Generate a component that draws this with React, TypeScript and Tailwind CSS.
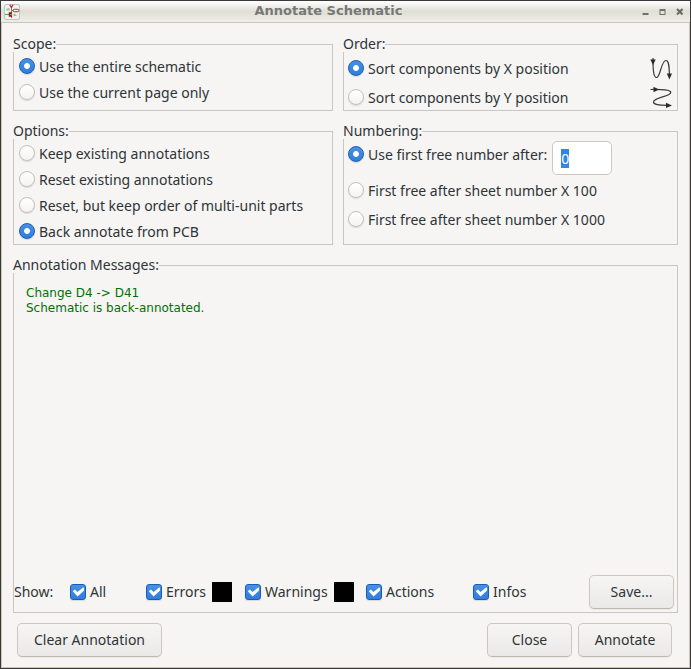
import { useEffect, useRef, useState, type ReactNode } from 'react'

type Scope = 'all' | 'page'
type Order = 'x' | 'y'
type Option = 'keep' | 'reset' | 'reset-order' | 'back'
type Numbering = 'first' | 'x100' | 'x1000'

interface Choice<T extends string> {
  id: T
  label: string
}

const scopes: Choice<Scope>[] = [
  { id: 'all', label: 'Use the entire schematic' },
  { id: 'page', label: 'Use the current page only' },
]

const options: Choice<Option>[] = [
  { id: 'keep', label: 'Keep existing annotations' },
  { id: 'reset', label: 'Reset existing annotations' },
  { id: 'reset-order', label: 'Reset, but keep order of multi-unit parts' },
  { id: 'back', label: 'Back annotate from PCB' },
]

const messages = ['Change D4 -> D41', 'Schematic is back-annotated.']

interface GroupProps {
  title: string
  className?: string
  bodyClassName?: string
  children: ReactNode
}

function Group({ title, className = '', bodyClassName = '', children }: GroupProps) {
  return (
    <fieldset className={`min-w-0 border border-[#c8c7c3] ${className}`}>
      <legend className="-ml-px bg-[#f6f5f4] leading-4">{title}</legend>
      <div className={bodyClassName}>{children}</div>
    </fieldset>
  )
}

interface RadioProps {
  name: string
  label: string
  checked: boolean
  onChange: () => void
}

function Radio({ name, label, checked, onChange }: RadioProps) {
  return (
    <label className="flex h-[26px] items-center gap-1 whitespace-nowrap">
      <input
        type="radio"
        name={name}
        checked={checked}
        onChange={onChange}
        className="size-4 shrink-0 appearance-none rounded-full border border-[#c3beb9] bg-linear-to-b from-white to-[#f4f3f2] shadow-[0_1px_1px_rgba(0,0,0,0.12)] checked:border-[#185fb4] checked:bg-[radial-gradient(circle,#fff_0_2.5px,transparent_3.3px),linear-gradient(#4a90e2,#2f7de0)]"
      />
      <span className="pt-0.5">{label}</span>
    </label>
  )
}

function Check({ label, children }: { label: string; children?: ReactNode }) {
  return (
    <div className="flex items-center gap-1.5">
      <label className="flex items-center gap-1">
        <span className="relative size-4 shrink-0">
          <input
            type="checkbox"
            defaultChecked
            className="peer block size-4 appearance-none rounded-[3px] border border-[#c3beb9] bg-white shadow-[0_1px_1px_rgba(0,0,0,0.12)] checked:border-[#185fb4] checked:bg-linear-to-b checked:from-[#4a90e2] checked:to-[#2f7de0]"
          />
          <svg viewBox="0 0 16 16" className="pointer-events-none absolute inset-0 hidden size-4 peer-checked:block">
            <path d="M3 7.6V7L5 5.4 7.4 8 13.2 3.4H14V6.4L7.6 12.6Z" fill="#fff" />
          </svg>
        </span>
        {label}
      </label>
      {children}
    </div>
  )
}

function Button({ className = '', children }: { className?: string; children: ReactNode }) {
  return (
    <button
      type="button"
      className={`h-[34px] rounded-[5px] border border-[#cdc7c2] border-b-[#bfb8b1] bg-linear-to-b from-[#f6f5f4] to-[#eae9e7] shadow-[0_1px_1px_rgba(0,0,0,0.05)] ${className}`}
    >
      {children}
    </button>
  )
}

function AppIcon() {
  return (
    <svg viewBox="0 0 16 16" className="size-4">
      <rect x="0.5" y="0.5" width="15" height="15" rx="1.5" fill="#f1f1f0" stroke="#c4c4c2" />
      <path d="M7.5 2v12M7.5 6.5H10M1 10.5H6" stroke="#4fa33c" fill="none" />
      <path d="M5.8 0.8 7.4 3.6 9 0.8" stroke="#b92430" fill="none" strokeWidth="1.2" />
      <rect x="9.2" y="5.3" width="5.6" height="2.4" rx="1" fill="#fff" stroke="#b92430" />
      <path d="M5.5 8.2v4.6M5.5 10 8 8.5M5.5 11 8 12.6" stroke="#b3101c" strokeWidth="1.5" fill="none" />
      <path d="M2.5 5.3 5.5 4.6M2.5 6H6M9.5 10.7l2-0.7M9.5 11.4H12.5" stroke="#a3a7a8" fill="none" />
    </svg>
  )
}

function OrderXIcon() {
  return (
    <svg viewBox="0 0 22 23" className="h-[23px] w-[22px]">
      <path d="M3 1C3 13 3.5 20.5 6.5 20.5C10.5 20.5 11 3.5 16 3.5C19 3.5 19.2 10 19.4 17" fill="none" stroke="#3a3a3a" strokeWidth="1.2" />
      <path d="M0.3 2.5H5.7L3 8ZM16.8 16.5H22L19.4 22.5Z" fill="#2b2b2b" />
    </svg>
  )
}

function OrderYIcon() {
  return (
    <svg viewBox="0 0 22 23" className="h-[23px] w-[22px]">
      <path d="M0.5 3.5C12 3.3 20.8 3.5 20.8 6.5C20.8 10.5 3.5 11.5 3.5 16C3.5 19 9 19.2 17 19.4" fill="none" stroke="#3a3a3a" strokeWidth="1.2" />
      <path d="M3.5 0.8V6.2L9 3.5ZM16 16.7V22.1L22 19.4Z" fill="#2b2b2b" />
    </svg>
  )
}

function TitleBar() {
  return (
    <header className="flex h-[22px] items-center border-b border-[#c9c7b4] bg-[linear-gradient(#ffffff,#dfdfd6_50%,#efeee6)] pr-[2px] pl-[3px]">
      <AppIcon />
      <h1 className="flex-1 pb-px text-center font-['DejaVu_Sans'] text-[13px] leading-4 font-bold text-[#777777]">
        Annotate Schematic
      </h1>
      <button type="button" aria-label="Minimize" className="flex w-[17px] justify-center">
        <svg viewBox="0 0 7 7" className="size-[7px]">
          <path d="M0.5 5h6v2h-6Z" fill="#707070" />
        </svg>
      </button>
      <button type="button" aria-label="Maximize" className="flex w-[17px] justify-center">
        <svg viewBox="0 0 7 7" className="size-[7px]">
          <path fillRule="evenodd" d="M0.5 1h6v6h-6ZM1.5 3v3h4V3Z" fill="#707070" />
        </svg>
      </button>
      <button type="button" aria-label="Close window" className="flex w-[17px] justify-center">
        <svg viewBox="0 0 7 7" className="size-[7px]">
          <path d="M1 1 6.5 6.5M6.5 1 1 6.5" stroke="#686868" strokeWidth="2" />
        </svg>
      </button>
    </header>
  )
}

export default function App() {
  const [scope, setScope] = useState<Scope>('all')
  const [order, setOrder] = useState<Order>('x')
  const [option, setOption] = useState<Option>('back')
  const [numbering, setNumbering] = useState<Numbering>('first')
  const firstNumber = useRef<HTMLInputElement>(null)

  useEffect(() => {
    firstNumber.current?.focus()
    firstNumber.current?.select()
  }, [])

  return (
    <div className="flex min-h-screen flex-col border border-[#3b383b] bg-[#f6f5f4] font-['Noto_Sans',sans-serif] text-sm text-[#2e3436]">
      <TitleBar />

      <main className="flex flex-1 flex-col border border-t-0 border-[#c9c7b4] px-[11px] pt-[13px] pb-[10px]">
        <div className="grid grid-cols-[320fr_335fr] gap-x-[10px] gap-y-3">
          <Group title="Scope:" bodyClassName="pt-px pb-[5px] pl-[5px]">
            {scopes.map((s) => (
              <Radio key={s.id} name="scope" label={s.label} checked={scope === s.id} onChange={() => setScope(s.id)} />
            ))}
          </Group>

          <Group title="Order:" bodyClassName="pt-[3px] pr-[5px] pl-1">
            <div className="flex items-center justify-between">
              <Radio name="order" label="Sort components by X position" checked={order === 'x'} onChange={() => setOrder('x')} />
              <OrderXIcon />
            </div>
            <div className="mt-[3px] flex items-center justify-between">
              <Radio name="order" label="Sort components by Y position" checked={order === 'y'} onChange={() => setOrder('y')} />
              <OrderYIcon />
            </div>
          </Group>

          <Group title="Options:" bodyClassName="pt-px pl-[5px]">
            {options.map((o) => (
              <Radio key={o.id} name="options" label={o.label} checked={option === o.id} onChange={() => setOption(o.id)} />
            ))}
          </Group>

          <Group title="Numbering:" bodyClassName="pt-[2px] pl-1">
            <div className="flex h-[33px] items-start gap-[5px]">
              <Radio
                name="numbering"
                label="Use first free number after:"
                checked={numbering === 'first'}
                onChange={() => setNumbering('first')}
              />
              <input
                ref={firstNumber}
                type="text"
                defaultValue="0"
                aria-label="First number"
                className="h-[34px] w-[60px] rounded-[5px] border border-[#cdc7c2] bg-white px-2 outline-none selection:bg-[#3584e4] selection:text-white"
              />
            </div>
            <div className="mt-[3px] flex flex-col gap-[3px]">
              <Radio
                name="numbering"
                label="First free after sheet number X 100"
                checked={numbering === 'x100'}
                onChange={() => setNumbering('x100')}
              />
              <Radio
                name="numbering"
                label="First free after sheet number X 1000"
                checked={numbering === 'x1000'}
                onChange={() => setNumbering('x1000')}
              />
            </div>
          </Group>
        </div>

        <Group title="Annotation Messages:" className="mt-3 flex-1" bodyClassName="pb-[3px]">
          {/* The message pane takes whatever height the other rows leave */}
          <div className="min-h-[calc(100vh-367px)] px-3 pt-[13px] font-['DejaVu_Sans'] text-xs leading-[15px] text-[#007200]">
            {messages.map((m) => (
              <p key={m}>{m}</p>
            ))}
          </div>

          {/* Severity filters */}
          <div className="grid grid-cols-[56px_76px_99px_121px_107px_1fr] items-center pr-[3px]">
            <span>Show:</span>
            <Check label="All" />
            <Check label="Errors">
              <span className="size-5 bg-black" />
            </Check>
            <Check label="Warnings">
              <span className="size-5 bg-black" />
            </Check>
            <Check label="Actions" />
            <div className="flex items-center justify-between">
              <Check label="Infos" />
              <Button className="w-[85px]">Save...</Button>
            </div>
          </div>
        </Group>

        <footer className="mt-[10px] flex gap-[6px] pr-[6px] pl-1">
          <Button className="mr-auto w-[145px]">Clear Annotation</Button>
          <Button className="w-[85px]">Close</Button>
          <Button className="w-[94px]">Annotate</Button>
        </footer>
      </main>
    </div>
  )
}
